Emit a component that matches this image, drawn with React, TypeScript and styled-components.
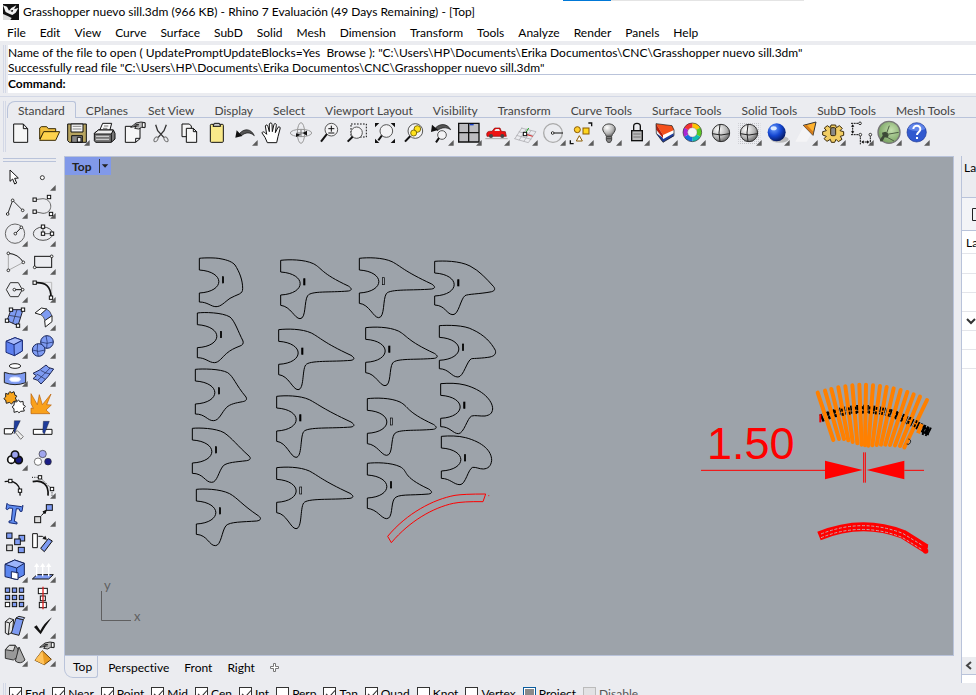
import React from 'react';
import styled, { createGlobalStyle } from 'styled-components';

const GlobalStyle = createGlobalStyle`
  * { box-sizing: border-box; }
  body { margin: 0; background: #ebecf0; }
  button, input { font: inherit; color: inherit; margin: 0; }
  button { border: 0; padding: 0; background: none; white-space: nowrap; }
  h1, p { margin: 0; font: inherit; }
`;

const line = '#b9c3da';
const softLine = '#d3d8e6';

const Window = styled.div`
  display: flex;
  flex-direction: column;
  height: 100vh;
  overflow: hidden;
  background: #ebecf0;
  color: #000;
  font: 12px/15px Lato, 'Open Sans', sans-serif;
  font-variant-ligatures: none;
`;
const TitleBar = styled.header`
  position: relative;
  display: flex;
  flex: none;
  align-items: center;
  gap: 4px;
  height: 23px;
  padding-left: 3px;
  background: #fff;
  white-space: nowrap;
`;
const LoadStrip = styled.div`
  position: absolute;
  top: 0;
  left: 563px;
  width: 241px;
  height: 1px;
  background: linear-gradient(to right, #0078d7 48px, #e4e4e4 48px);
`;
const MenuBar = styled.nav`
  display: flex;
  flex: none;
  gap: 14px;
  height: 18px;
  padding: 0 7px;
  background: #fff;
`;
const Gripped = styled.section`
  flex: none;
  margin-left: 3px;
  padding-left: 3px;
  border-left: 1px solid ${softLine};
  box-shadow: inset 1px 0 #ebecf0, inset 2px 0 ${softLine};
`;
const CommandPane = styled(Gripped)`
  margin-top: 4px;
  padding-left: 4px;
`;
const History = styled.div`
  height: 30px;
  line-height: 15px;
  background: #fff;
  border-bottom: 1px solid ${line};
  white-space: pre;
  overflow-x: clip;
`;
const Prompt = styled.label`
  display: flex;
  height: 18px;
  background: #fff;
  font-weight: 700;
  line-height: 17px;
`;
const PromptInput = styled.input`
  flex: 1;
  border: 0;
  padding: 0 4px;
  background: none;
  outline: none;
`;
const Divider = styled.hr`
  flex: none;
  width: 100%;
  height: 1px;
  margin: 3px 0 4px;
  border: 0;
  background: ${softLine};
`;
const ToolPane = styled(Gripped)`
  height: 51px;
`;
const TabStrip = styled.div`
  display: flex;
  height: 17px;
  box-shadow: inset 0 -1px ${line};
`;
const ToolTab = styled.button<{ $on?: boolean }>`
  flex: none;
  height: 17px;
  padding: 0 ${p => (p.$on ? 10 : 9)}px;
  line-height: 17px;
  color: #444;
  background: ${p => (p.$on ? '#ebecf0' : 'none')};
  border: 1px solid ${p => (p.$on ? line : 'transparent')};
  border-bottom: 0;
  border-radius: ${p => (p.$on ? '8px 3px 0 0' : 0)};
`;
const ToolRow = styled.div`
  display: flex;
  margin: 1px 0 0 -1px;
`;
const IconButton = styled.button`
  flex: none;
  width: 28px;
  height: 28px;
`;
const IconSvg = styled.svg`
  display: block;
  width: 28px;
  height: 28px;
`;
const Body = styled.main`
  display: flex;
  flex: none;
  margin-top: 4px;
`;
const Sidebar = styled.aside`
  display: grid;
  grid-template-columns: 28px 28px;
  flex: none;
  align-content: start;
  width: 64px;
  padding-bottom: 15px;
`;
const SideGrip = styled.div`
  grid-column: 1 / 3;
  height: 4px;
  margin: 2px 0 2px 3px;
  border: solid ${line};
  border-width: 1px 0;
`;
const ViewColumn = styled.section`
  display: flex;
  flex: 1;
  flex-direction: column;
  min-width: 0;
`;
const Viewport = styled.div`
  position: relative;
  flex: 1;
  background: #9da3aa;
  border: 1px solid ${line};
  overflow: hidden;
`;
const Canvas = styled.svg`
  position: absolute;
  inset: 0;
  width: 100%;
  height: 100%;
`;
const ViewTitle = styled.button`
  position: absolute;
  top: 0;
  left: 0;
  display: flex;
  align-items: center;
  height: 18px;
  padding-left: 7px;
  background: #8199e9;
  color: #222;
  font-weight: 700;
`;
const ViewArrow = styled.svg`
  width: 12px;
  height: 14px;
  margin-left: 8px;
  border-left: 1px solid #333;
`;
const ViewTabs = styled.div`
  display: flex;
  align-items: center;
  gap: 15px;
  height: 27px;
  padding-bottom: 5px;
`;
const ViewTab = styled.button`
  height: 22px;
`;
const ActiveViewTab = styled(ViewTab)`
  margin-right: -5px;
  padding: 0 5px 0 8px;
  border: 1px solid ${line};
  border-top: 0;
  border-radius: 0 0 3px 9px;
`;
const SidePanel = styled.aside`
  flex: none;
  width: 15px;
  margin-left: 7px;
  overflow: hidden;
  border-left: 1px solid ${line};
  background: #fff;
`;
const PanelHead = styled.div`
  height: 41px;
  padding: 4px 0 0 2px;
  background: #ebecf0;
`;
const PanelTools = styled.div`
  display: flex;
  align-items: center;
  height: 34px;
  padding-left: 10px;
  background: #f3f4f7;
  border: solid ${line};
  border-width: 1px 0;
`;
const PanelGlyph = styled.svg`
  flex: none;
`;
const PanelRow = styled.div<{ $h: number }>`
  display: flex;
  align-items: center;
  height: ${p => p.$h}px;
  padding-left: 4px;
  border-bottom: 1px solid #e4e5ea;
`;
const PanelFill = styled.div`
  height: 288px;
`;
const ScrollButton = styled.button`
  display: block;
  width: 100%;
  height: 18px;
  padding-left: 3px;
  text-align: left;
  background: #ebecf0;
  border-bottom: 1px solid ${line};
`;
const SnapBar = styled(Gripped)`
  display: flex;
  gap: 7px;
  height: 22px;
  padding: 3px 0 0 5px;
`;
const Snap = styled.label<{ $dim?: boolean }>`
  display: flex;
  align-items: flex-start;
  gap: 3px;
  color: ${p => (p.$dim ? '#555' : '#000')};
`;
const Check = styled.input<{ $mixed?: boolean }>`
  appearance: none;
  flex: none;
  width: 13px;
  height: 13px;
  margin-top: 1px;
  border: 1px solid ${p => (p.$mixed ? '#0a5c9e' : '#333')};
  background: ${p => (p.$mixed ? '#8a8a8a' : '#fff')};
  box-shadow: ${p => (p.$mixed ? 'inset 0 0 0 1px #fff' : 'none')};
  &:checked::after {
    content: '';
    display: block;
    width: 4px;
    height: 8px;
    margin-left: 4px;
    border: solid #222;
    border-width: 0 1px 1px 0;
    transform: rotate(42deg);
  }
  &:disabled { border-color: #bbb; background: #e2e2e4; }
`;

const K = '#111';
const blue = '#7e9bf2';
const Corner = () => <path d="M83 63V80H66Z" fill="#5c5c5c" />;
const Sq = ({ x, y, f = '#fff' }: { x: number; y: number; f?: string }) => (
  <rect x={x - 5} y={y - 5} width="10" height="10" fill={f} stroke={K} strokeWidth="3" />
);
const Dot = ({ x, y }: { x: number; y: number }) => (
  <circle cx={x} cy={y} r="4" fill="#fff" stroke={K} strokeWidth="2.5" />
);
const Lens = ({ x, y, r, hx, hy }: { x: number; y: number; r: number; hx: number; hy: number }) => {
  const k = r * 0.71;
  return (
    <>
      <circle cx={x} cy={y} r={r} fill="#f3f3f5" stroke="#555" strokeWidth="3" />
      <path d={`M${x - k} ${y + k}L${hx} ${hy}`} stroke={K} strokeWidth="6" />
    </>
  );
};
const Ball = () => (
  <>
    <circle cx="45" cy="42" r="26" fill="url(#gray)" stroke="#333" strokeWidth="3" />
    <path d="M19 44Q45 52 71 44M42 16Q36 42 42 68" fill="none" stroke="#222" strokeWidth="3" />
  </>
);
const SmallHand = ({ x, y }: { x: number; y: number }) => (
  <g transform={`translate(${x} ${y})`} stroke={K} strokeWidth="2.5" fill="#bbb">
    <path d="M0 17L16 4L31 1L43 3V18L33 17L24 22L12 20L17 14Z" />
    <path d="M35 3H43V17H35ZM14 8L25 9M11 12L24 13" fill="#fff" />
  </g>
);

type Tool = [string, boolean, React.ReactNode];

const tools: Tool[] = [
  ['New', false, <path d="M23 15H52L65 29V70H23ZM52 15V29H65" fill="#f6f6f6" stroke={K} strokeWidth="3" />],
  ['Open', false, <g stroke="#3b2c06" strokeWidth="3">
    <path d="M17 60V27L22 23H38L43 29H65V39H30Z" fill="#f0bf3e" /><path d="M29 38H77L65 64H17Z" fill="#ffd34d" />
  </g>],
  ['Save', true, <g stroke={K} strokeWidth="3">
    <path d="M17 15H73V70H22L17 65Z" fill="#b7a45f" /><path d="M27 15H63V39H27Z" fill="#f5f5f5" />
    <path d="M32 22H58M32 30H58" stroke="#888" /><path d="M29 50H61V70H29Z" fill="#888" /><path d="M46 55H57V69H46Z" fill="#eee" />
  </g>],
  ['Print', false, <g stroke={K} strokeWidth="3">
    <path d="M29 34L38 13H65L59 36Z" fill="#fafafa" /><path d="M42 21H55M39 28H52" stroke="#777" />
    <path d="M13 43L25 33H70L75 43V60L64 70H17L13 65Z" fill="#777" /><path d="M13 43L25 33H70L64 45H13Z" fill="#eee" />
    <path d="M18 52H57M18 61H57" stroke="#ddd" /><path d="M64 46V69" />
  </g>],
  ['Properties', false, <>
    <path d="M22 22H66V59L53 70H22ZM66 58H53V70" fill="#f6f6f6" stroke={K} strokeWidth="3" /><SmallHand x={38} y={8} />
  </>],
  ['Cut', false, <g fill="none" stroke="#333" strokeWidth="3">
    <path d="M29 17L35 35L54 56M61 17L54 35L36 56" strokeWidth="4" />
    <ellipse cx="30" cy="61" rx="5" ry="8" transform="rotate(35 30 61)" stroke="#777" />
    <ellipse cx="60" cy="61" rx="5" ry="8" transform="rotate(-35 60 61)" stroke="#777" />
  </g>],
  ['Copy', false, <g fill="#f6f6f6" stroke={K} strokeWidth="3">
    <path d="M24 15H46L52 21V53H24Z" /><path d="M37 28H58L68 38V70H37ZM58 28V38H68" />
  </g>],
  ['Paste', false, <g stroke={K} strokeWidth="3">
    <rect x="25" y="16" width="39" height="54" rx="3" fill="#f9e98a" /><path d="M33 22L37 13H52L56 22Z" fill="#ccc" />
  </g>],
  ['Undo', true, <>
    <path d="M29 43C45 26 64 30 73 50C60 39 48 39 34 50Z" fill="#555" stroke={K} strokeWidth="2" />
    <path d="M16 56L20 34L37 51Z" fill={K} />
  </>],
  ['Pan', false, <path d="M28 71L21 55L12 42C13 36 19 38 26 46L22 21C24 16 29 17 30 23L34 38L34 15C36 10 42 11 42 16L43 38L48 16C51 12 56 14 55 19L52 41L60 25C64 21 68 25 66 30L60 53L56 71Z" fill="#fff" stroke={K} strokeWidth="3" />],
  ['Rotate view', false, <g fill="none" stroke="#999" strokeWidth="3">
    <ellipse cx="45" cy="42" rx="32" ry="11" /><ellipse cx="45" cy="42" rx="11" ry="31" />
    <path d="M45 32V53M32 42H58" stroke="#777" /><path d="M45 47L30 54V43ZM50 42L63 50V35Z" fill={K} stroke="none" />
  </g>],
  ['Zoom', false, <><Lens x={52} y={32} r={19} hx={21} hy={68} /><path d="M43 29H61M52 20V38M43 42H61" stroke={K} strokeWidth="3" /></>],
  ['Zoom window', false, <>
    <rect x="27" y="15" width="46" height="39" fill="none" stroke={K} strokeWidth="3" strokeDasharray="5 4" />
    <Lens x={44} y={41} r={17} hx={17} hy={68} />
  </>],
  ['Zoom extents', false, <>
    <Lens x={49} y={36} r={19} hx={25} hy={64} /><path d="M15 12H28L15 25ZM75 12V25L62 12ZM15 72V59L28 72ZM75 72H62L75 59Z" fill={K} />
  </>],
  ['Zoom selected', false, <>
    <Lens x={52} y={36} r={22} hx={21} hy={68} />
    <g fill="#ffe21c" stroke="#6b5a00" strokeWidth="2.5"><circle cx="58" cy="30" r="10" /><circle cx="47" cy="42" r="9" /></g>
  </>],
  ['Undo view', true, <>
    <path d="M29 26C45 11 65 15 74 32C60 24 48 24 34 35Z" fill="#555" stroke={K} strokeWidth="2" />
    <path d="M15 39L18 17L36 33Z" fill={K} /><Lens x={48} y={48} r={13} hx={30} hy={70} />
  </>],
  ['Four viewports', true, <>
    <path d="M14 13H75V69H14ZM44 13V69M14 41H75" fill="#bcbcc0" stroke={K} strokeWidth="4" /><path d="M47 17H59" stroke="#1840c8" strokeWidth="4" />
  </>],
  ['Named view', true, <>
    <path d="M14 46C14 38 20 36 30 37L38 27H54L58 37L70 38L73 52H15Z" fill="#ee1212" stroke="#8b0808" strokeWidth="2" />
    <path d="M37 36L41 30H51L54 36Z" fill="#eee" /><circle cx="27" cy="51" r="6" fill="#444" /><circle cx="61" cy="51" r="6" fill="#444" />
    <path d="M10 59H77" stroke="#aaa" strokeWidth="3" />
  </>],
  ['Set CPlane', true, <>
    <path d="M33 27L78 38M26 38L71 50M19 49L64 61M13 59L55 71M36 26L14 60M50 29L27 64M64 33L41 68M78 38L55 71" stroke="#b0b0b4" strokeWidth="2.5" />
    <path d="M45 45L56 27" stroke="#1ba01b" strokeWidth="3" /><path d="M45 45L68 52" stroke="#d22" strokeWidth="3" /><Sq x={45} y={45} />
  </>],
  ['Set object view', true, <>
    <circle cx="45" cy="42" r="28" fill="none" stroke="#aaa" strokeWidth="4" /><path d="M45 42H75" stroke={K} strokeWidth="3" /><Dot x={44} y={42} />
  </>],
  ['Select', true, <g stroke="#8a5a00" strokeWidth="3">
    <circle cx="34" cy="32" r="9" fill="#ffcf2e" /><rect x="51" y="27" width="18" height="18" fill="#ffd61e" />
    <path d="M40 50L49 66H31Z" fill="#fff" /><path d="M67 12H77V22M13 64V74H23" fill="none" stroke={K} strokeWidth="4" />
  </g>],
  ['Hide', true, <g stroke="#444" strokeWidth="3">
    <path d="M37 52C35 43 26 40 26 29C28 10 62 10 64 29C64 40 55 43 53 52Z" fill="url(#gray)" /><path d="M37 53H53V63L49 70H41L37 63ZM37 59H53" fill="#888" />
  </g>],
  ['Lock', true, <g stroke={K} strokeWidth="4">
    <path d="M35 35V22C35 10 55 10 55 22V35" fill="none" /><rect x="29" y="35" width="32" height="30" fill="#bbb" /><path d="M34 45H56M34 54H56" stroke="#777" strokeWidth="3" />
  </g>],
  ['Layers', true, <>
    <path d="M18 43L39 70L71 52V40L39 56Z" fill="#203d9b" /><path d="M18 28L40 60L72 42L71 28L39 42Z" fill="#fff" />
    <path d="M18 14L66 20L72 33L39 48Z" fill="#f4501c" /><path d="M18 14L39 48V58L19 32Z" fill="#b91d09" />
    <path d="M18 14L66 20L72 33V50L39 70L19 43Z" fill="none" stroke={K} strokeWidth="2" />
  </>],
  ['Properties color', true, <g fill="none" strokeWidth="14">
    <path d="M43 19A21 21 0 0 1 61 29" stroke="#ffc400" /><path d="M61 29A21 21 0 0 1 61 50" stroke="#5acb22" />
    <path d="M61 50A21 21 0 0 1 43 61" stroke="#12bdb0" /><path d="M43 61A21 21 0 0 1 25 50" stroke="#176be0" />
    <path d="M25 50A21 21 0 0 1 25 29" stroke="#a928d4" /><path d="M25 29A21 21 0 0 1 43 19" stroke="#f43131" />
    <circle cx="43" cy="40" r="28" stroke="#333" strokeWidth="2" /><circle cx="43" cy="40" r="14" fill="#f4f4f6" stroke="#555" strokeWidth="1" />
  </g>],
  ['Shaded view', false, <Ball />],
  ['Render preview', true, <>
    <rect x="13" y="10" width="66" height="66" fill="url(#dots)" /><Ball />
  </>],
  ['Render', true, <>
    <ellipse cx="53" cy="61" rx="27" ry="10" fill="#bbb" /><circle cx="44" cy="40" r="27" fill="url(#bluef)" />
    <ellipse cx="35" cy="28" rx="9" ry="6" fill="#dbe9ff" />
  </>],
  ['Spotlight', true, <>
    <path d="M40 24L16 68H50L64 44Z" fill="#f4f4f6" />
    <path d="M40 19L78 9L69 49Z" fill="#ffb22e" stroke="#333" strokeWidth="3" /><path d="M41 20L69 48L70 38L50 17Z" fill="#d67d1c" />
  </>],
  ['Options', true, <g stroke="#3b2a08" strokeWidth="3">
    <path d="M39 18H53L55 26L64 20L73 28L66 35L77 38V49L67 52L72 61L61 68L54 61L50 70H40L37 61L27 67L18 59L25 52L14 48V38L25 35L19 27L28 20L37 26Z" fill="#f1cd63" />
    <rect x="38" y="26" width="15" height="24" rx="4" fill="#888" />
  </g>],
  ['Dimension', true, <g fill="none" stroke={K} strokeWidth="3">
    <path d="M15 13H37M15 47H40M20 18V41M43 47V76M73 47V76M49 69H67" strokeDasharray="6 2" />
    <path d="M20 16L15 23H25ZM20 44L15 37H25ZM46 69L53 64V74ZM70 69L63 64V74Z" fill={K} stroke="none" />
    <Dot x={42} y={13} /><Dot x={43} y={47} /><Dot x={73} y={47} />
  </g>],
  ['Grasshopper', true, <>
    <circle cx="45" cy="40" r="33" fill="url(#green)" stroke="#777" strokeWidth="4" />
    <path d="M17 62L26 50L24 41L34 38L41 42L44 50L40 56L32 55L26 66L20 68Z" fill="#3c4a36" />
    <path d="M38 42L46 20M40 46L74 40M38 54L60 66" fill="none" stroke="#4e6044" strokeWidth="3" />
  </>],
  ['Help', true, <>
    <circle cx="44" cy="40" r="29" fill="#3159cf" stroke="#1d3793" strokeWidth="2" /><path d="M18 30A29 29 0 0 1 70 30Q44 42 18 30" fill="#5f84ea" />
    <path d="M34 30C34 17 56 17 55 31C55 39 45 39 45 48M45 54V60" fill="none" stroke="#fff" strokeWidth="6" />
  </>],
];

const sideTools: Tool[] = [
  ['Select objects', false, <path d="M30 18V52L38 45L44 60L50 57L44 43L55 42Z" fill="#fff" stroke={K} strokeWidth="3" />],
  ['Point', true, <circle cx="43" cy="41" r="6" fill="#fff" stroke="#333" strokeWidth="3" />],
  ['Polyline', true, <><path d="M23 66L38 25L68 55" fill="none" stroke="#333" strokeWidth="3" /><Dot x={23} y={66} /><Dot x={38} y={25} /><Dot x={68} y={55} /></>],
  ['Curve', true, <><path d="M20 23L45 20C76 22 76 64 45 64L20 59" fill="none" stroke="#666" strokeWidth="3" /><Sq x={20} y={23} /><Sq x={63} y={15} /><Sq x={20} y={59} /><Sq x={69} y={66} /></>],
  ['Circle', true, <><circle cx="45" cy="41" r="29" fill="none" stroke="#666" strokeWidth="3" /><path d="M46 41L64 22" stroke={K} strokeWidth="3" /><Dot x={46} y={41} /><Dot x={64} y={22} /></>],
  ['Ellipse', true, <><ellipse cx="45" cy="41" rx="29" ry="20" fill="none" stroke="#555" strokeWidth="3" /><path d="M45 20V41H72" fill="none" stroke={K} strokeWidth="2" /><Sq x={45} y={20} /><Sq x={45} y={41} /><Sq x={72} y={41} /></>],
  ['Arc', true, <><path d="M25 16V67L70 43" fill="none" stroke="#aaa" strokeWidth="3" /><path d="M25 16Q55 18 70 43" fill="none" stroke={K} strokeWidth="3" /><Dot x={25} y={16} /><Dot x={25} y={67} /><Dot x={70} y={43} /></>],
  ['Rectangle', true, <><rect x="20" y="25" width="51" height="33" fill="none" stroke={K} strokeWidth="3" /><Dot x={71} y={25} /><Dot x={20} y={58} /></>],
  ['Polygon', true, <><path d="M19 41L31 20H55L67 41L55 62H31Z" fill="none" stroke="#333" strokeWidth="3" /><path d="M43 41H68" stroke={K} strokeWidth="3" /><Dot x={43} y={41} /><Dot x={68} y={41} /></>],
  ['Fillet', true, <><path d="M20 19H71V65" fill="none" stroke="#bbb" strokeWidth="3" /><path d="M20 20C53 18 69 30 69 65" fill="none" stroke={K} strokeWidth="5" /><Sq x={20} y={20} /><Sq x={69} y={65} /></>],
  ['Surface from points', true, <><path d="M33 17H69L54 65L21 50Z" fill={blue} stroke="#223" strokeWidth="3" /><path d="M51 17L38 58M27 34L62 40" stroke="#223" strokeWidth="2" /><Sq x={33} y={17} /><Sq x={69} y={17} /><Sq x={21} y={50} /><Sq x={54} y={65} /></>],
  ['Loft', true, <g stroke="#222" strokeWidth="3"><path d="M36 30L54 14Q68 20 72 37L52 52Q48 36 36 30Z" fill={blue} strokeWidth="2" /><path d="M21 27L40 12L56 15L37 32Z" fill="#fff" /><path d="M50 50L72 35V53L52 69Z" fill="#fff" /></g>],
  ['Box', true, <g stroke="#1c2d78" strokeWidth="3"><path d="M18 28L45 17L67 25V57L43 71L18 61Z" fill="#5c7ff0" /><path d="M18 28L45 17L67 25L42 38Z" fill="#a9bbfa" /><path d="M42 38L67 25V57L43 71Z" fill="#7c9af5" /></g>],
  ['Sphere', true, <g fill={blue} stroke="#17255c" strokeWidth="3"><circle cx="57" cy="30" r="19" /><circle cx="32" cy="54" r="19" /><path d="M13 54Q32 62 51 54M29 35Q25 54 31 73M38 30Q57 38 76 30M54 11Q60 29 56 49" fill="none" strokeWidth="2" /></g>],
  ['Surface tools', true, <g stroke="#222" strokeWidth="3"><ellipse cx="45" cy="18" rx="17" ry="7" fill="#fff" /><path d="M13 37Q45 48 77 37V68Q45 80 13 68Z" fill={blue} /><ellipse cx="45" cy="58" rx="16" ry="7" fill="#fff" stroke="#dce4ff" /></g>],
  ['Mesh surface', true, <g fill={blue} stroke="#1c2450" strokeWidth="3"><path d="M15 40Q32 34 54 15Q60 25 77 27Q62 50 39 72Q31 58 15 56L25 47Z" /><path d="M26 42Q40 50 52 58M38 31Q52 40 66 42M30 60Q50 42 66 24" fill="none" strokeWidth="2" /></g>],
  ['Plugins', false, <g stroke="#222" strokeWidth="3"><path d="M17 16L25 19Q29 5 34 15L42 11L45 22Q55 22 46 30L50 38L40 41Q35 53 29 43L19 46L17 36Q7 33 17 27Z" fill="#f8a51c" /><path d="M43 41L50 42Q56 31 60 42L69 40L70 51Q82 55 70 60L73 69L62 70Q56 79 53 70L42 73V62Q32 57 42 52Z" fill="#fff" /></g>],
  ['Explode', false, <path d="M9 17L28 50L34 20L43 50L69 18L56 50L70 51L54 66L66 77H9V60L16 62L9 46Z" fill="#f9a11c" stroke="#b65d08" strokeWidth="2" />],
  ['Trim', false, <g stroke={K} strokeWidth="3"><path d="M13 38H44L35 54H13Z" fill="#fff" /><path d="M45 48L52 44L70 62L62 70Z" fill="#eee" stroke="#777" /><path d="M43 14H61L42 54V34Z" fill="#203d9b" strokeWidth="1" /></g>],
  ['Split', false, <g stroke={K} strokeWidth="3"><path d="M16 40H72V55H16Z" fill="#fff" /><path d="M46 16H64L49 55L44 48Z" fill="#203d9b" strokeWidth="1" /></g>],
  ['Group', true, <g stroke={K} strokeWidth="5"><circle cx="34" cy="47" r="11" fill="#fff" /><circle cx="56" cy="48" r="11" fill="#181b80" /><circle cx="45" cy="32" r="11" fill="#9ca3f0" /></g>],
  ['Ungroup', false, <g stroke="#333" strokeWidth="2"><circle cx="44" cy="30" r="11" fill="#a0a5ee" /><circle cx="30" cy="53" r="11" fill="#fff" /><circle cx="60" cy="53" r="10" fill="#1a1d86" /></g>],
  ['Edit points', false, <><path d="M14 29C45 22 63 40 60 71" fill="none" stroke={K} strokeWidth="4" /><Sq x={31} y={27} /><Sq x={60} y={56} /></>],
  ['Control points', true, <><path d="M14 29C45 22 63 40 60 71" fill="none" stroke={K} strokeWidth="5" /><path d="M12 16H36L72 52V75" fill="none" stroke={K} strokeWidth="3" strokeDasharray="3 4" /><Sq x={36} y={16} /><Sq x={72} y={51} /></>],
  ['Text', false, <path d="M21 10L26 15L65 20L69 16L66 34H60L58 27L49 26L43 64L51 67V72L27 68V63L34 62L38 25L27 24L23 29L18 27Z" fill="#608cf0" stroke="#172c78" strokeWidth="3" />],
  ['Move', true, <g stroke={K} strokeWidth="3"><rect x="55" y="14" width="18" height="17" fill={blue} /><rect x="20" y="50" width="18" height="18" fill="#ddd" /><path d="M40 47L53 33" /><path d="M55 31L51 41L45 35Z" fill={K} /></g>],
  ['Copy objects', false, <g stroke={K} strokeWidth="3" fill={blue}><rect x="20" y="15" width="16" height="16" /><rect x="57" y="22" width="17" height="17" /><rect x="44" y="33" width="17" height="17" /><rect x="55" y="58" width="18" height="16" /><rect x="20" y="51" width="17" height="17" fill="#ddd" /></g>],
  ['Rotate', false, <g stroke={K} strokeWidth="3"><path d="M14 17H28V59H14Z" fill="#fff" /><path d="M31 25Q45 22 51 31" fill="none" /><path d="M44 32L56 35L52 24Z" fill={K} strokeWidth="1" /><path d="M38 61L61 32L73 39L49 71Z" fill={blue} /></g>],
  ['Boolean', true, <g stroke="#17255c" strokeWidth="3"><path d="M15 25L44 12L73 22V57L48 70L15 62Z" fill="#5b86f0" /><path d="M15 25L44 12L73 22L50 36Z" fill="#9db5fb" /><path d="M34 47L54 50V71L34 67Z" fill="#fff" /><path d="M50 36V52" /></g>],
  ['Extrude', true, <><path d="M27 56H76L62 69H13Z" fill={blue} stroke={K} strokeWidth="3" /><path d="M26 61V24M44 61V24M62 61V24" stroke="#fff" strokeWidth="4" /><path d="M18 33L26 21L34 33ZM36 33L44 21L52 33ZM54 33L62 21L70 33Z" fill="#fff" /></>],
  ['Array', true, <g stroke={K} strokeWidth="3" fill={blue}>{[12, 34, 55].map(y => [16, 37, 58].map(x => <rect key={`${x}${y}`} x={x} y={y} width="13" height="13" fill={x === 16 && y === 55 ? '#fff' : blue} />))}</g>],
  ['Align', true, <g stroke={K} strokeWidth="3" fill="#fff"><rect x="31" y="13" width="27" height="16" /><rect x="37" y="36" width="15" height="14" /><rect x="34" y="55" width="21" height="16" /><path d="M45 8V76" stroke="#d22" strokeWidth="4" /></g>],
  ['Solid editing', true, <g stroke="#222" strokeWidth="3"><path d="M16 29L28 19L41 23L37 60L25 68L16 63Z" fill="#e5e5e5" /><path d="M16 29L29 33L41 23M29 33L25 68" fill="none" /><path d="M48 18L70 23L57 70L34 64Z" fill={blue} /><path d="M48 18L57 13L74 17L70 23Z" fill="#b9c9fb" /></g>],
  ['Check', true, <path d="M18 45L26 40L37 56Q48 34 72 16Q52 42 38 67Z" fill={K} />],
  ['Primitives', true, <g stroke="#333" strokeWidth="3"><path d="M16 29L28 16H46L54 27V50L40 60L16 55Z" fill="#999" /><path d="M16 29L28 16H46L40 33Z" fill="#ddd" /><path d="M57 21L75 60Q61 75 46 63Z" fill="#aaa" /></g>],
  ['Flow', true, <><path d="M43 32L70 58L49 74L21 61Z" fill="#e99d24" stroke="#6b420a" strokeWidth="3" /><path d="M43 32L49 74L21 61Z" fill="#ffc35c" /><SmallHand x={35} y={5} /></>],
];

const fin = (tip: number, low: number) =>
  `C25 -3 70 -3 98 10C125 24 ${tip - 92} 38 ${tip - 8} 77C${tip + 3} 84 ${tip + 4} 90 ${tip - 8} 92C${tip - 65} 97 92 91 81 106C70 122 77 ${low} 58 ${low}C42 ${low} 30 138 0 135`;

type Rib = { x: number; y: number; d: string; open?: boolean };
const ribs: Rib[] = [
  { x: 58, y: 40, d: 'C15 -2 50 -2 62 1C87 5 100 12 107 20C120 40 130 65 130 90C130 100 127 103 120 107C110 112 100 115 92 120C75 132 65 145 50 145C35 145 25 131 0 131' },
  { x: 52, y: 204, d: 'C20 -3 75 -2 98 12C113 25 122 55 137 84C139 92 136 96 128 99C110 106 100 111 88 121C75 132 65 149 51 149C35 149 25 134 0 134' },
  { x: 46, y: 373, d: 'C20 -2 75 -2 97 10C115 22 120 45 152 83C156 91 152 95 142 97C120 101 105 104 94 114C78 130 72 154 54 154C36 154 30 134 0 134' },
  { x: 37, y: 550, d: 'C20 -2 70 -1 95 13C120 30 135 52 170 83C177 90 174 95 163 97C130 101 105 102 93 112C78 130 75 162 58 162C38 162 34 135 0 135' },
  { x: 49, y: 733, d: 'C20 -2 70 -2 100 13C125 27 135 45 187 80C196 87 194 93 181 95C140 98 100 97 89 109C76 125 75 169 57 169C38 169 34 137 0 135' },
  { x: 302, y: 46, d: fin(211, 175) },
  { x: 296, y: 254, d: fin(225, 180) },
  { x: 290, y: 454, d: fin(231, 183) },
  { x: 290, y: 668, d: fin(228, 183), open: true },
  { x: 538, y: 40, d: fin(225, 178), open: true },
  { x: 557, y: 248, d: fin(214, 174) },
  { x: 562, y: 461, d: fin(206, 170), open: true },
  { x: 562, y: 655, d: fin(192, 166) },
  { x: 764, y: 49, d: 'C25 -2 75 -2 106 14C135 29 155 52 177 76C183 84 180 90 166 92C135 98 98 98 91 103C78 112 72 160 55 160C36 160 32 132 0 131' },
  { x: 778, y: 242, d: 'C25 -2 75 -2 100 12C135 28 155 50 168 74C171 85 165 91 152 94C130 98 105 98 97 99C83 103 73 154 56 154C36 154 30 130 0 129' },
  { x: 782, y: 416, d: 'C25 -2 50 -2 73 4C125 18 156 50 156 76C154 90 148 94 133 97C118 98 103 94 93 97C80 102 70 150 53 150C37 150 28 129 0 129' },
  { x: 784, y: 574, d: 'C25 -2 50 -2 73 4C125 18 151 44 151 72C149 90 140 97 126 98C113 98 105 92 94 93C80 98 73 145 56 145C37 145 28 127 0 126' },
];

const slats = [
  [383, 68, 430, 210], [405, 62, 447, 207], [424, 57, 462, 207], [445, 52, 475, 211], [466, 49, 488, 216], [487, 46, 502, 220],
  [508, 44, 515, 224], [528, 44, 525, 226], [549, 46, 535, 227], [570, 48, 547, 226], [590, 51, 560, 225], [611, 55, 573, 224],
  [632, 60, 586, 224], [652, 66, 600, 225], [671, 73, 615, 226], [690, 80, 630, 228], [711, 90, 643, 232],
];

const Drawing = () => (
  <Canvas aria-label="Top view drawing">
    <svg x="115" y="88" width="340" height="310" viewBox="0 0 1020 930" fill="none" stroke="#000" strokeWidth="3">
      {ribs.map(r => (
        <g key={`${r.x}-${r.y}`} transform={`translate(${r.x} ${r.y})`}>
          <path d={`M0 0${r.d}V104C78 100 78 40 0 35Z`} />
          {r.open
            ? <rect x="69" y="58" width="6" height="21" strokeWidth="2" />
            : <rect x="69" y="55" width="4" height="19" fill="#000" strokeWidth="2" />}
        </g>
      ))}
      <path d="M623 874C680 805 760 763 825 751Q850 747 917 747L909 770Q850 769 820 775C760 788 690 827 634 893Z" stroke="#f00" />
      <path d="M924 752h4" stroke="#f00" strokeWidth="2" />
    </svg>
    <svg x="625" y="213" width="250" height="200" viewBox="0 0 750 600" fill="none">
      <path d="M393 145Q520 88 640 145L720 185" stroke="#000" strokeWidth="24" strokeDasharray="7 3" />
      <path d="M405 142Q520 97 640 150" stroke="#9da3aa" strokeWidth="2" />
      <path d="M391 133V157" stroke="#e00" strokeWidth="6" />
      <path d="M694 168L720 182M694 183L716 194M703 166L698 195M717 172L707 198" stroke="#000" strokeWidth="6" />
      {slats.map(s => <path key={s[0]} d={`M${s[0]} ${s[1]}L${s[2]} ${s[3]}`} stroke="#ff8000" strokeWidth="12" strokeLinecap="round" />)}
      <path d="M414 125L420 148M434 120L439 143M455 116L460 140M476 112L480 136M497 110L500 134M518 109L519 132M539 109L537 132M560 111L557 134M580 113L575 136M601 118L595 140M622 124L615 146M642 132L634 154M662 141L653 163M681 151L672 173" stroke="#000" strokeWidth="5" strokeDasharray="9 4" />
      <path d="M695 162L684 190" stroke="#ff8000" strokeWidth="12" />
      <path d="M655 207A8 8 0 1 1 650 222" stroke="#222" strokeWidth="3" />
      <path d="M33 301H406M643 301H702M521 247V338M526 247V338" stroke="#f00" strokeWidth="3" />
      <path d="M405 272V328L518 300ZM643 272V328L530 300Z" fill="#f00" />
      <path d="M387 498Q515 445 640 493L708 536" stroke="#f00" strokeWidth="27" />
      <path d="M393 492Q515 443 638 490L703 530M393 503Q515 454 636 502L698 540" stroke="#c5a7ab" strokeWidth="3" strokeDasharray="9 5" />
      <circle cx="706" cy="530" r="8" fill="#f00" /><circle cx="707" cy="543" r="8" fill="#f00" />
    </svg>
    <text x="642" y="302" fill="#f00" fontFamily="Liberation Sans, Arial, sans-serif" fontSize="45">1.50</text>
    <path d="M36.500 434V463.500H66" fill="none" stroke="#5f5f60" />
    <g fill="#5f5f60" fontSize="13"><text x="39" y="433">y</text><text x="69" y="464">x</text></g>
  </Canvas>
);

const Defs = () => (
  <svg width="0" height="0" aria-hidden="true" display="block">
    <defs>
      <radialGradient id="gray" cx=".35" cy=".3" r=".8"><stop stopColor="#fff" /><stop offset=".6" stopColor="#b4b4b4" /><stop offset="1" stopColor="#555" /></radialGradient>
      <radialGradient id="bluef" cx=".35" cy=".3" r=".8"><stop stopColor="#6fa2ff" /><stop offset=".5" stopColor="#1345d0" /><stop offset="1" stopColor="#041048" /></radialGradient>
      <radialGradient id="green" cx=".6" cy=".4" r=".7"><stop stopColor="#c4dfae" /><stop offset="1" stopColor="#6d9a56" /></radialGradient>
      <pattern id="dots" width="6" height="6" patternUnits="userSpaceOnUse"><rect width="3" height="3" fill="#c3c4c9" /></pattern>
    </defs>
  </svg>
);

const ToolButton = ({ tool: [name, more, art] }: { tool: Tool }) => (
  <IconButton aria-label={name}>
    <IconSvg viewBox="0 0 84 84">{art}{more && <Corner />}</IconSvg>
  </IconButton>
);

const menus = ['File', 'Edit', 'View', 'Curve', 'Surface', 'SubD', 'Solid', 'Mesh', 'Dimension', 'Transform', 'Tools', 'Analyze', 'Render', 'Panels', 'Help'];
const tabs = ['Standard', 'CPlanes', 'Set View', 'Display', 'Select', 'Viewport Layout', 'Visibility', 'Transform', 'Curve Tools', 'Surface Tools', 'Solid Tools', 'SubD Tools', 'Mesh Tools'];
const snaps: [string, boolean][] = [['End', true], ['Near', true], ['Point', true], ['Mid', true], ['Cen', true], ['Int', true], ['Perp', false], ['Tan', true], ['Quad', true], ['Knot', false], ['Vertex', false], ['Project', false], ['Disable', false]];

export default function App() {
  return (
    <Window>
      <GlobalStyle />
      <Defs />
      <TitleBar>
        <svg width="16" height="16" viewBox="0 0 48 48">
          <path d="M0 0H48V48H0Z" fill="#111" />
          <path d="M0 4L12 8L18 20L25 12L40 4L33 16L46 12L38 26L28 33L20 30L8 24Z" fill="#f2f2f2" />
          <path d="M0 30L14 36L26 42L22 48H0Z" fill="#ddd" />
          <path d="M22 20L31 17L28 25Z" fill="#111" />
        </svg>
        <h1>Grasshopper nuevo sill.3dm (966 KB) - Rhino 7 Evaluación (49 Days Remaining) - [Top]</h1>
        <LoadStrip />
      </TitleBar>
      <MenuBar>{menus.map(m => <button key={m}>{m}</button>)}</MenuBar>
      <CommandPane>
        <History>
          <p>{'Name of the file to open ( UpdatePromptUpdateBlocks=Yes  Browse ): "C:\\Users\\HP\\Documents\\Erika Documentos\\CNC\\Grasshopper nuevo sill.3dm"'}</p>
          <p>{'Successfully read file "C:\\Users\\HP\\Documents\\Erika Documentos\\CNC\\Grasshopper nuevo sill.3dm"'}</p>
        </History>
        <Prompt>Command:<PromptInput type="text" /></Prompt>
      </CommandPane>
      <Divider />
      <ToolPane>
        <TabStrip>{tabs.map((t, i) => <ToolTab key={t} $on={i === 0}>{t}</ToolTab>)}</TabStrip>
        <ToolRow>{tools.map((t, i) => <ToolButton key={i} tool={t} />)}</ToolRow>
      </ToolPane>
      <Body>
        <Sidebar>
          <SideGrip />
          {sideTools.map(t => <ToolButton key={t[0]} tool={t} />)}
        </Sidebar>
        <ViewColumn>
          <Viewport>
            <Drawing />
            <ViewTitle>Top<ViewArrow viewBox="0 0 12 14"><path d="M2 5H9L5.500 9Z" fill="#222" /></ViewArrow></ViewTitle>
          </Viewport>
          <ViewTabs>
            <ActiveViewTab>Top</ActiveViewTab>
            <ViewTab>Perspective</ViewTab>
            <ViewTab>Front</ViewTab>
            <ViewTab>Right</ViewTab>
            <ViewTab aria-label="New viewport tab">
              <svg width="9" height="9" viewBox="0 0 9 9"><path d="M3.500 .5H5.500V3.500H8.500V5.500H5.500V8.500H3.500V5.500H.5V3.500H3.500Z" fill="#fff" stroke="#777" /></svg>
            </ViewTab>
          </ViewTabs>
        </ViewColumn>
        <SidePanel>
          <PanelHead>Layers</PanelHead>
          <PanelTools><PanelGlyph width="10" height="13" viewBox="0 0 10 13"><path d="M.5 .5H10M.5 .5V12.500H10" fill="none" stroke="#222" /></PanelGlyph></PanelTools>
          <PanelRow $h={23}>Layer</PanelRow>
          <PanelRow $h={20} /><PanelRow $h={19} /><PanelRow $h={19} />
          <PanelRow $h={19}><PanelGlyph width="10" height="8" viewBox="0 0 10 8"><path d="M1 2L5 6L9 2" fill="none" stroke="#333" strokeWidth="2" /></PanelGlyph></PanelRow>
          <PanelRow $h={19} /><PanelRow $h={19} />
          <PanelFill />
          <ScrollButton aria-label="Scroll left"><svg width="8" height="9" viewBox="0 0 8 9"><path d="M6 1L2 4.500L6 8" fill="none" stroke="#444" strokeWidth="2" /></svg></ScrollButton>
        </SidePanel>
      </Body>
      <SnapBar>
        {snaps.map(([name, on]) => (
          <Snap key={name} $dim={name === 'Disable'}>
            <Check type="checkbox" defaultChecked={on} disabled={name === 'Disable'} $mixed={name === 'Project'} />{name}
          </Snap>
        ))}
      </SnapBar>
    </Window>
  );
}
